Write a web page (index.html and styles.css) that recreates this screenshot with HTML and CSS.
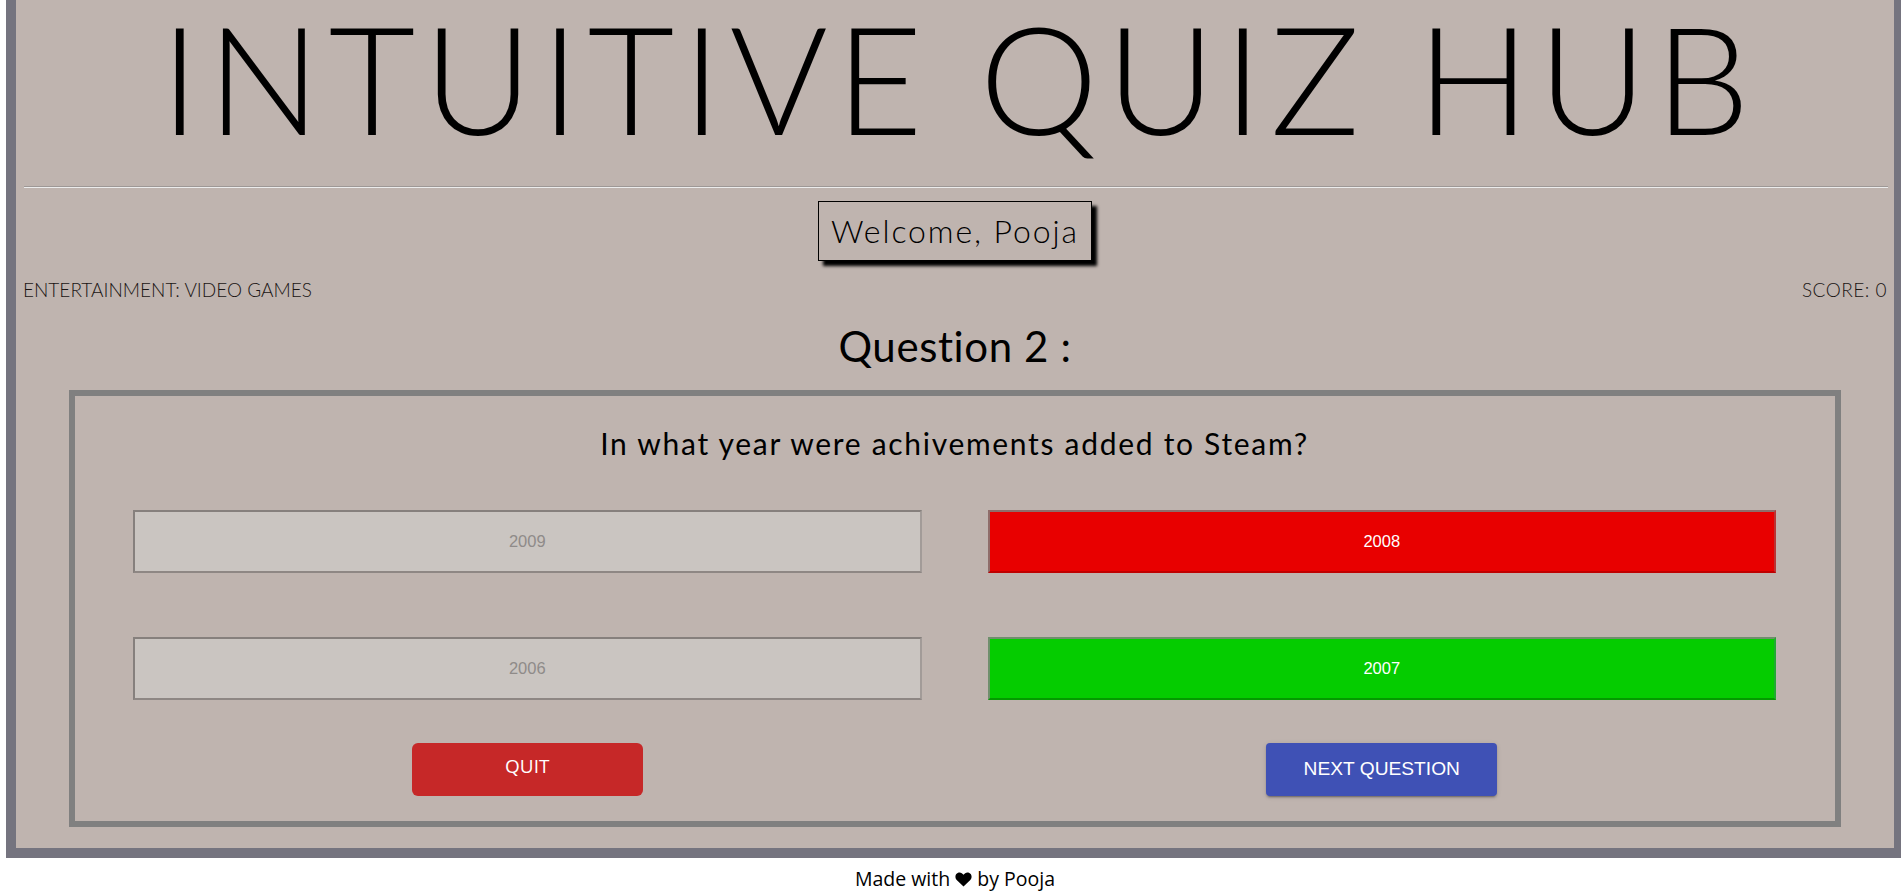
FILE: index.html
```html
<!DOCTYPE html>
<html lang="en">
<head>
<meta charset="utf-8">
<title>Intuitive Quiz Hub</title>
<link rel="stylesheet" href="styles.css">
</head>
<body>
<div class="frame">
  <header class="header">
    <h1 class="title">INTUITIVE QUIZ HUB</h1>
    <hr class="rule">
    <div class="welcome-wrap"><div class="welcome">Welcome, Pooja</div></div>
  </header>
  <div class="meta">
    <span class="category">ENTERTAINMENT: VIDEO GAMES</span>
    <span class="score">SCORE: 0</span>
  </div>
  <h2 class="qnum">Question 2 :</h2>
  <section class="card">
    <p class="question">In what year were achivements added to Steam?</p>
    <div class="options">
      <button class="opt opt-off" disabled>2009</button>
      <button class="opt opt-wrong">2008</button>
      <button class="opt opt-off" disabled>2006</button>
      <button class="opt opt-right">2007</button>
    </div>
    <div class="actions">
      <button class="btn btn-quit">QUIT</button>
      <button class="btn btn-next">NEXT QUESTION</button>
    </div>
  </section>
</div>
<footer class="footer">Made with <svg class="heart" viewBox="0 0 16 14" width="17" height="15"><path d="M8 13.6 L1.6 7.4 C-0.4 5.4 0.1 1.6 2.9 0.6 C5 -0.1 6.9 0.9 8 2.6 C9.1 0.9 11 -0.1 13.1 0.6 C15.9 1.6 16.4 5.4 14.4 7.4 Z" fill="#000"/></svg> by Pooja</footer>
</body>
</html>
```
FILE: styles.css
```css
html, body {
  margin: 0;
  padding: 0;
  overflow: hidden;
  background: #ffffff;
}

body {
  width: 1910px;
}

.frame {
  margin-left: 6px;
  width: 1878px;
  background: #bfb4af;
  border: 10px solid #75747f;
  border-top: 0;
  font-family: "Lato", "Open Sans", sans-serif;
  color: #000;
}

.header {
  padding-top: 2px;
}

.title {
  margin: 0;
  font-weight: 300;
  font-size: 150px;
  line-height: 150px;
  text-align: center;
  letter-spacing: 8px;
  padding-left: 8px;
}

.rule {
  margin: 34px 6px 0 8px;
  border: 0;
  border-top: 1px solid #9e9896;
  border-bottom: 1px solid #ececec;
  height: 0;
}

.welcome-wrap {
  display: flex;
  justify-content: center;
  padding-top: 13px;
}

.welcome {
  border: 1px solid #000;
  box-shadow: 5px 5px 3px #000;
  font-weight: 300;
  font-size: 32px;
  line-height: 40px;
  padding: 9px 0;
  width: 272px;
  text-align: center;
  letter-spacing: 1.9px;
}

.meta {
  display: flex;
  justify-content: space-between;
  padding: 0 7px;
  margin-top: 16px;
  font-size: 19px;
  line-height: 26px;
  font-weight: 300;
  letter-spacing: 0;
  color: #1a1514;
}

.score {
  letter-spacing: 0.5px;
}

.qnum {
  margin: 18px 0 0;
  text-align: center;
  font-weight: 400;
  font-size: 42px;
  line-height: 50px;
  letter-spacing: 0.6px;
}

.card {
  margin: 19px 53px 21px;
  border: 6px solid #808080;
  padding: 0 59px 25px 58px;
}

.question {
  margin: 27px 0 0;
  text-align: center;
  font-size: 30px;
  line-height: 40px;
  letter-spacing: 1.7px;
}

.options {
  display: grid;
  grid-template-columns: 1fr 1fr;
  column-gap: 66px;
  row-gap: 64px;
  margin-top: 47px;
}

.opt {
  height: 63px;
  font-family: "Liberation Sans", Arial, sans-serif;
  font-size: 16.5px;
  border: 2px solid;
  border-color: #86807d #a29b98 #8e8784 #86807d;
  padding: 0;
}

.opt-off {
  background: #cac5c1;
  color: #8f8b89;
}

.opt-wrong {
  background: #e80000;
  color: #fff;
  border-color: #8f6d6a #b33 #c00000 #8f6d6a;
}

.opt-right {
  background: #05cc00;
  color: #fff;
  border-color: #6f8f6c #2a3 #049a00 #6f8f6c;
}

.actions {
  display: grid;
  grid-template-columns: 1fr 1fr;
  column-gap: 66px;
  margin-top: 43px;
  justify-items: center;
}

.btn {
  width: 231px;
  height: 53px;
  border: 0;
  color: #fff;
  cursor: pointer;
}

.btn-quit {
  background: #c62828;
  border-radius: 6px;
  font-family: "Open Sans", sans-serif;
  font-size: 19px;
  padding: 0 0 7px;
}

.btn-next {
  background: #3f51b5;
  border-radius: 4px;
  font-family: "Liberation Sans", Arial, sans-serif;
  font-size: 19.2px;
  box-shadow: 0 3px 1px -2px rgba(0,0,0,.2), 0 2px 2px 0 rgba(0,0,0,.14), 0 1px 5px 0 rgba(0,0,0,.12);
  padding: 0 0 2px;
}

.footer {
  margin-left: 6px;
  width: 1898px;
  text-align: center;
  font-family: "Open Sans", sans-serif;
  font-size: 19.5px;
  line-height: 24px;
  padding-top: 9px;
  color: #000;
}

.heart {
  vertical-align: -1px;
}
```
